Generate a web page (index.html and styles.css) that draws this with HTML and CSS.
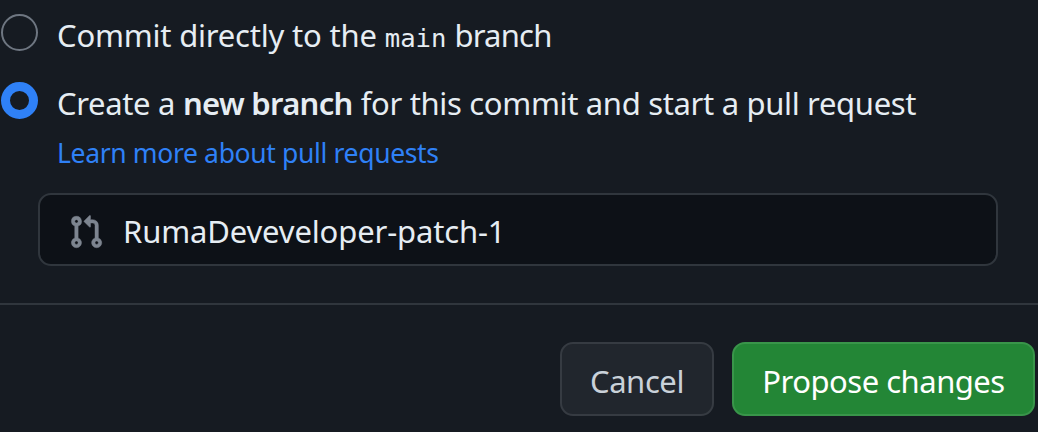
FILE: index.html
```
<!DOCTYPE html>
<html lang="en">
<head>
<meta charset="utf-8">
<title>Propose changes</title>
<link rel="stylesheet" href="styles.css">
</head>
<body>
<main class="dialog">
  <section class="options">
    <label class="option">
      <span class="radio"></span>
      <span class="option-text"><span class="lead">Commit directly to the</span> <code class="branch">main</code> <span class="tail">branch</span></span>
    </label>
    <label class="option">
      <span class="radio radio-checked"></span>
      <span class="option-text"><span class="create">Create a</span> <strong>new branch</strong> <span class="rest">for this commit and start a pull request</span></span>
    </label>
    <a class="link">Learn more about pull requests</a>
    <div class="field">
      <svg class="icon" viewBox="0 0 16 16" fill="currentColor"><path d="M1.5 3.25a2.25 2.25 0 1 1 3 2.122v5.256a2.251 2.251 0 1 1-1.5 0V5.372A2.25 2.25 0 0 1 1.5 3.25Zm5.677-.177L9.573.677A.25.25 0 0 1 10 .854V2.5h1A2.5 2.5 0 0 1 13.5 5v5.628a2.251 2.251 0 1 1-1.5 0V5a1 1 0 0 0-1-1h-1v1.646a.25.25 0 0 1-.427.177L7.177 3.427a.25.25 0 0 1 0-.354ZM3.75 2.5a.75.75 0 1 0 0 1.5.75.75 0 0 0 0-1.5Zm0 9.5a.75.75 0 1 0 0 1.5.75.75 0 0 0 0-1.5Zm8.25.75a.75.75 0 1 0 1.5 0 .75.75 0 0 0-1.5 0Z" stroke="currentColor" stroke-width=".2"/></svg>
      <span class="field-text">RumaDeveveloper-patch-1</span>
    </div>
  </section>
  <footer class="actions">
    <button class="button cancel">Cancel</button>
    <button class="button primary">Propose changes</button>
  </footer>
</main>
</body>
</html>
```
FILE: styles.css
```
* { box-sizing: border-box; }
body {
  margin: 0;
  background: #161b22;
  color: #e6edf3;
  font: 31px/42px "Noto Sans", "Open Sans", sans-serif;
}
.dialog { height: 432px; overflow: hidden; }
.options {
  height: 305px;
  padding-top: 14px;
  border-bottom: 2px solid #30363d;
}
.option {
  display: flex;
  height: 68px;
  padding-left: 1px;
}
.radio {
  flex: none;
  width: 37px;
  height: 37px;
  margin-right: 19px;
  border: 2px solid #6e7681;
  border-radius: 50%;
}
.radio-checked { border: 9px solid #2f81f7; }
.option-text { white-space: nowrap; }
.lead { letter-spacing: -0.2px; }
.branch { font: 25.6px/42px "DejaVu Sans Mono", monospace; }
.tail { letter-spacing: -0.8px; }
.create { letter-spacing: -0.35px; }
strong { font-weight: 600; letter-spacing: -0.7px; }
.rest { letter-spacing: -0.33px; }
.link {
  display: block;
  height: 43px;
  margin-top: -12px;
  padding-left: 57px;
  color: #2f81f7;
  font-size: 26.5px;
  line-height: 31px;
  letter-spacing: -0.35px;
}
.field {
  display: flex;
  align-items: center;
  gap: 19px;
  width: 960px;
  height: 73px;
  margin: 12px 0 0 38px;
  padding: 3px 0 0 28px;
  background: #0d1117;
  border: 2px solid #30363d;
  border-radius: 13px;
}
.icon { width: 36px; height: 36px; margin-top: 2px; color: #7d8590; }
.field-text { letter-spacing: -0.14px; }
.actions {
  display: flex;
  justify-content: flex-end;
  gap: 18px;
  padding: 37px 3px 0 0;
}
.button {
  height: 74px;
  padding: 4px 0 0;
  border: 2px solid #363b42;
  border-radius: 13px;
  font: inherit;
}
.cancel { width: 154px; background: #21262d; color: #c9d1d9; letter-spacing: -0.4px; }
.primary { width: 303px; background: #238636; border-color: #39954a; color: #fff; letter-spacing: -0.5px; }
```
